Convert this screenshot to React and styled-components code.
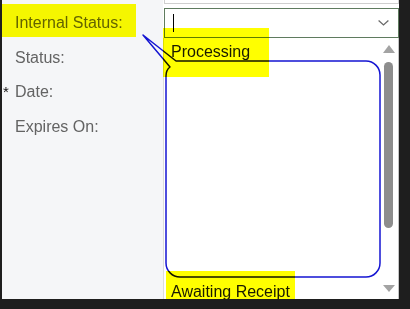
import styled, { createGlobalStyle } from "styled-components";

const Global = createGlobalStyle`
  html, body {
    margin: 0;
    padding: 0;
    background: #1e1e1e;
  }
  body {
    font-family: "Liberation Sans", Arial, sans-serif;
  }
`;

const labels = [
  { text: "Internal Status:" },
  { text: "Status:" },
  { text: "Date:", required: true },
  { text: "Expires On:" },
];

function App() {
  return (
    <>
      <Global />
      <Frame>
        <LeftPanel>
          {labels.map((l) => (
            <LabelRow key={l.text}>
              <Marker>{l.required ? "*" : ""}</Marker>
              <Label>{l.text}</Label>
            </LabelRow>
          ))}
        </LeftPanel>

        <RightPanel>
          <TopStub />
          <Combo>
            <Caret />
            <Chevron viewBox="0 0 11 6">
              <path d="M0.6 0.6 L5.5 5 L10.4 0.6" />
            </Chevron>
          </Combo>
          <List>
            <Options>
              <Option>Processing</Option>
              <Option $last>Awaiting Receipt</Option>
            </Options>
            <Scrollbar>
              <Arrow />
              <Thumb />
              <Arrow $down />
            </Scrollbar>
          </List>
        </RightPanel>

        {/* annotation layer: callout and highlighter marks */}
        <Callout viewBox="0 0 410 309">
          <path d="M176 61 L366 61 A14 14 0 0 1 380 75 L380 263 A14 14 0 0 1 366 277 L180 277 A14 14 0 0 1 166 263 L166 76 Q166 70 170 67 L143 35 Z" />
        </Callout>
        <Mark $x={2} $y={4} $w={134} $h={33} />
        <Mark $x={163} $y={28} $w={106} $h={49} />
        <Mark $x={166} $y={271} $w={129} $h={28} />
      </Frame>
    </>
  );
}

export default App;

const Frame = styled.div`
  position: relative;
  display: flex;
  width: 410px;
  height: 309px;
  box-sizing: border-box;
  padding: 0 11px 10px 2px;
  background: #1e1e1e;
  overflow: hidden;
`;

const LeftPanel = styled.div`
  width: 161px;
  flex-shrink: 0;
  background: #f5f6f8;
  display: flex;
  flex-direction: column;
  gap: 14.5px;
  padding-top: 13px;
  box-sizing: border-box;
`;

const LabelRow = styled.div`
  display: flex;
  align-items: flex-start;
  height: 20px;
`;

const Marker = styled.span`
  width: 13px;
  padding-left: 1px;
  box-sizing: border-box;
  font-size: 15px;
  line-height: 20px;
  color: #111;
`;

const Label = styled.span`
  font-size: 16px;
  line-height: 20px;
  color: #636363;
`;

const RightPanel = styled.div`
  flex: 1;
  display: flex;
  flex-direction: column;
  background: #ffffff;
`;

const TopStub = styled.div`
  height: 3px;
  margin-left: 1px;
  border: 1px solid #cfcfcf;
  border-top: none;
`;

const Combo = styled.div`
  margin: 4px 0 0 1px;
  height: 30px;
  box-sizing: border-box;
  border: 1px solid #5f7b5f;
  display: flex;
  align-items: center;
  padding: 0 9px 0 8px;
`;

const Caret = styled.div`
  width: 1px;
  height: 18px;
  background: #000;
`;

const Chevron = styled.svg`
  margin-left: auto;
  width: 11px;
  height: 6px;
  fill: none;
  stroke: #6a6a6a;
  stroke-width: 1.3;
`;

const List = styled.div`
  flex: 1;
  display: flex;
  border-left: 1px solid #dcdcdc;
  border-right: 1px solid #c4c4c4;
  overflow: hidden;
`;

const Options = styled.div`
  flex: 1;
  display: flex;
  flex-direction: column;
  padding: 4px 0 0 7px;
`;

const Option = styled.div`
  font-size: 16px;
  line-height: 20px;
  color: #1a1a1a;
  margin-top: ${(p) => (p.$last ? "auto" : "0")};
  margin-bottom: ${(p) => (p.$last ? "-3px" : "0")};
`;

const Scrollbar = styled.div`
  width: 19px;
  display: flex;
  flex-direction: column;
  align-items: center;
  padding: 7px 0 7px;
  box-sizing: border-box;
`;

const Arrow = styled.div`
  width: 0;
  height: 0;
  border-left: 6px solid transparent;
  border-right: 6px solid transparent;
  ${(p) =>
    p.$down
      ? "border-top: 7px solid #a3a3a3; margin-top: auto;"
      : "border-bottom: 8px solid #a3a3a3;"}
`;

const Thumb = styled.div`
  width: 9px;
  height: 166px;
  margin-top: 9px;
  border-radius: 5px;
  background: #8d8d8d;
`;

const Callout = styled.svg`
  position: absolute;
  left: 0;
  top: 0;
  width: 410px;
  height: 309px;
  pointer-events: none;
  fill: none;
  stroke: #1414d2;
  stroke-width: 1.5;
  stroke-linejoin: round;
`;

const Mark = styled.div`
  position: absolute;
  left: ${(p) => p.$x}px;
  top: ${(p) => p.$y}px;
  width: ${(p) => p.$w}px;
  height: ${(p) => p.$h}px;
  background: #ffff00;
  mix-blend-mode: multiply;
  pointer-events: none;
`;
